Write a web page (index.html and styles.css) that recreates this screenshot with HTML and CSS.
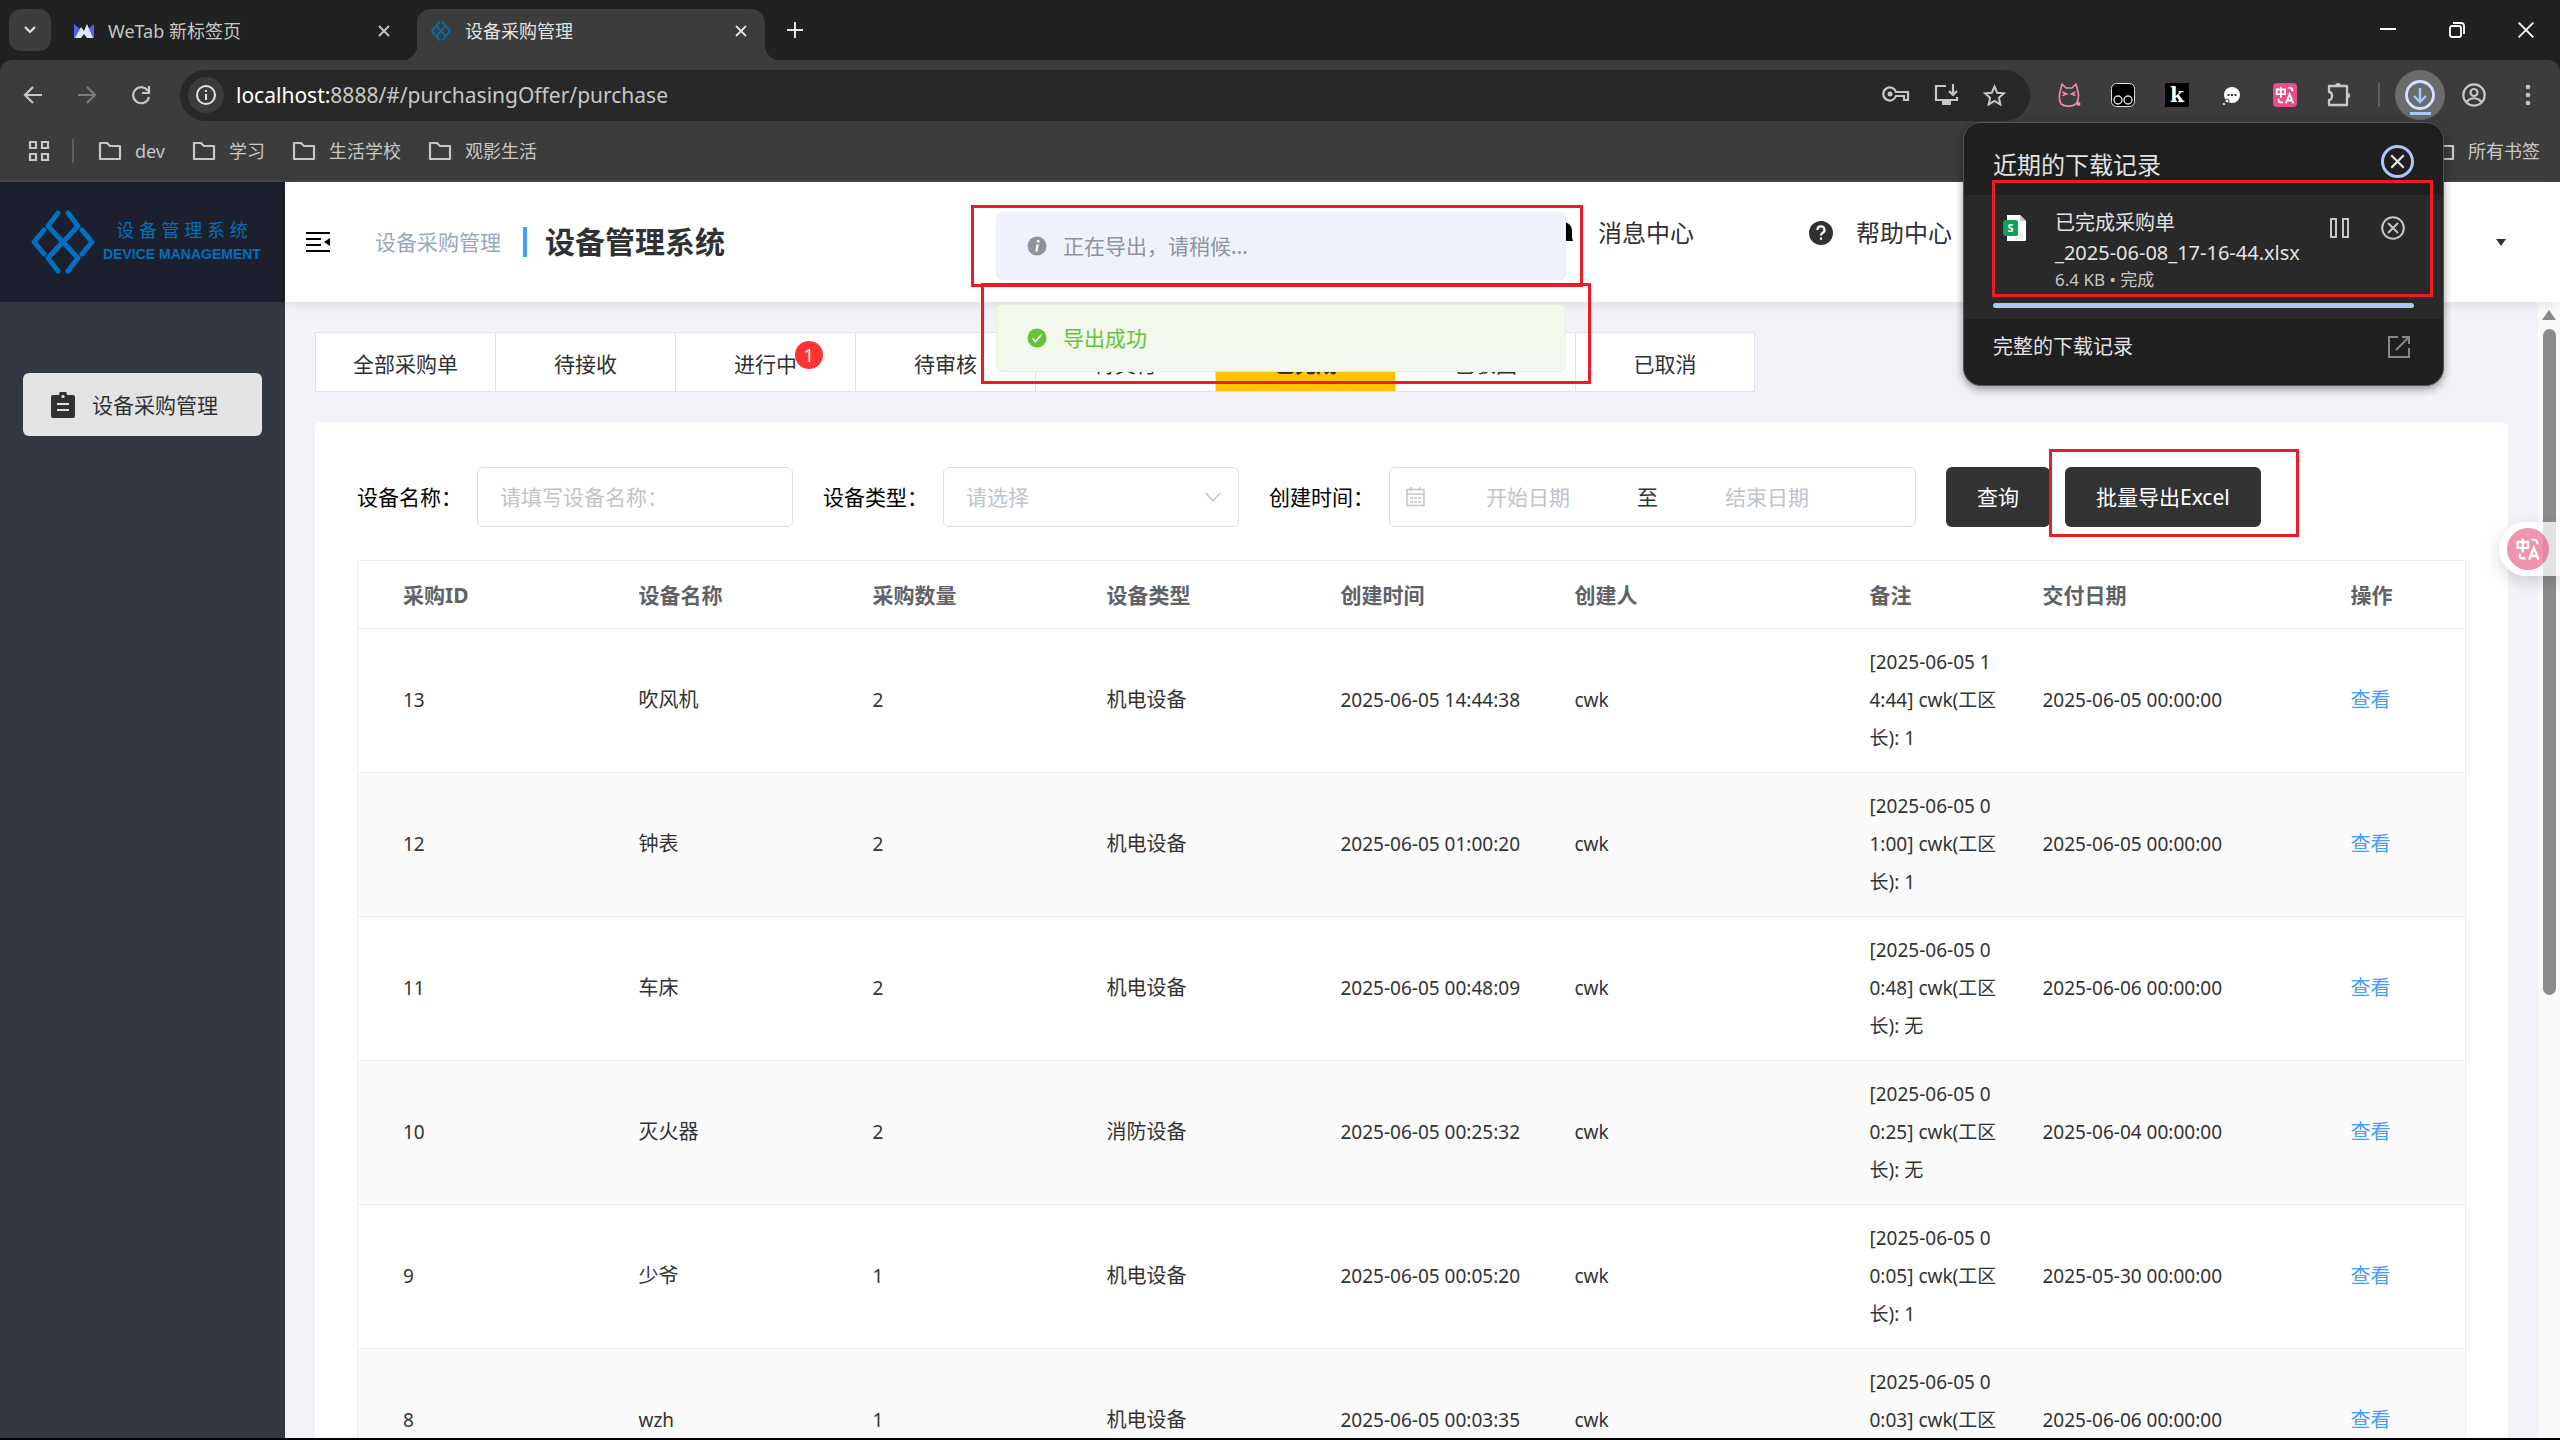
FILE: index.html
```html
<!DOCTYPE html>
<html lang="zh-CN">
<head>
  <meta charset="UTF-8">
  <meta name="viewport" content="width=device-width, initial-scale=1.0">
  <title>设备采购管理</title>
  <link rel="stylesheet" href="styles.css">
</head>
<body>

  <!-- shared symbols -->
  <svg class="defs" aria-hidden="true">
    <symbol id="i-x" viewBox="0 0 12 12"><path d="M1 1l10 10M11 1L1 11" fill="none" stroke="currentColor" stroke-width="1.8"/></symbol>
    <symbol id="i-folder" viewBox="0 0 24 20"><path d="M2 2h7l3 3h10v13H2z" fill="none" stroke="currentColor" stroke-width="2.2" stroke-linejoin="round"/></symbol>
    <symbol id="i-logo" viewBox="0 0 64 64">
      <g fill="none" stroke="#0070c0" stroke-width="5" stroke-linecap="round" stroke-linejoin="round">
        <path d="M27 3L17 16l30 32-10 13"/>
        <path d="M37 3l10 13-12 13"/>
        <path d="M29 35L17 48l10 13"/>
        <path d="M13 20L3 32l10 12"/>
        <path d="M51 20l10 12-10 12"/>
      </g>
    </symbol>
    <symbol id="i-trans" viewBox="0 0 24 24">
      <g fill="none" stroke="currentColor" stroke-width="2">
        <path d="M3 6h9v5H3zM7.500 3v12"/>
        <path d="M15 4h2a3 3 0 0 1 3 3v1M5 16v2a2 2 0 0 0 2 2h3"/>
        <path d="M13 21l4-10 4 10M14.500 18h5"/>
      </g>
    </symbol>
  </svg>

  <div class="tabstrip">
    <button class="tab-search" aria-label="搜索标签页"><svg width="12" height="8" viewBox="0 0 12 8"><path d="M1 1l5 5 5-5" fill="none" stroke="#e3e3e3" stroke-width="2.200"/></svg></button>
    <div class="tab">
      <svg class="favicon" viewBox="0 0 20 14"><path d="M0 0l6 5v9H0zM20 0l-6 5v9h6z" fill="#5661f0"/><path d="M1 14L7 3l3 4 3-7 6 14h-6l-3-4-3 4z" fill="#dfe3ff"/></svg>
      <span class="tab-title">WeTab 新标签页</span>
      <button class="tab-close" aria-label="关闭"><svg width="12" height="12"><use href="#i-x"/></svg></button>
    </div>
    <div class="tab active">
      <svg class="favicon"><use href="#i-logo"/></svg>
      <span class="tab-title">设备采购管理</span>
      <button class="tab-close" aria-label="关闭"><svg width="12" height="12"><use href="#i-x"/></svg></button>
    </div>
    <button class="tab-new" aria-label="新标签页"><svg width="16" height="16"><path d="M8 0v16M0 8h16" stroke="currentColor" stroke-width="2"/></svg></button>
    <div class="win-btns">
      <button aria-label="最小化"><svg width="16" height="16"><path d="M0 7h16" stroke="currentColor" stroke-width="2"/></svg></button>
      <button aria-label="还原"><svg width="16" height="16" viewBox="0 0 16 16"><rect x="1" y="4" width="11" height="11" rx="2" fill="none" stroke="currentColor" stroke-width="1.800"/><path d="M4 1h8a3 3 0 0 1 3 3v8" fill="none" stroke="currentColor" stroke-width="1.800"/></svg></button>
      <button aria-label="关闭窗口"><svg width="16" height="16" viewBox="0 0 12 12"><path d="M.5.500l11 11M11.500.500l-11 11" stroke="currentColor" stroke-width="1.400"/></svg></button>
    </div>
  </div>

  <div class="toolbar">
    <div class="nav-btns">
      <button aria-label="后退"><svg width="20" height="20" viewBox="0 0 20 20"><path d="M19 10H2M10 2l-8 8 8 8" fill="none" stroke="currentColor" stroke-width="2.200"/></svg></button>
      <button class="off" aria-label="前进"><svg width="20" height="20" viewBox="0 0 20 20"><path d="M1 10h17M10 2l8 8-8 8" fill="none" stroke="currentColor" stroke-width="2.200"/></svg></button>
      <button aria-label="重新加载"><svg width="20" height="20" viewBox="0 0 20 20"><path d="M17 6a8 8 0 1 0 1 6M18 1v7h-7" fill="none" stroke="currentColor" stroke-width="2.200"/></svg></button>
    </div>
    <div class="omnibox">
      <span class="site-info"><svg width="22" height="22" viewBox="0 0 22 22"><circle cx="11" cy="11" r="9" fill="none" stroke="#e3e3e3" stroke-width="2"/><path d="M11 10v6M11 6v2" stroke="#e3e3e3" stroke-width="2"/></svg></span>
      <div class="url"><b>localhost:</b>8888/#/purchasingOffer/purchase</div>
      <svg width="28" height="18" viewBox="0 0 28 18"><path d="M14 6h12v8h-4v-4h-8a6.500 6.500 0 1 1 0-4z" fill="none" stroke="currentColor" stroke-width="2.200"/><circle cx="8" cy="8" r="2.500" fill="currentColor"/></svg>
      <svg width="25" height="22" viewBox="0 0 25 22"><path d="M12 2H2v14h21v-3M19 0v10M15 7l4 4 4-4" fill="none" stroke="currentColor" stroke-width="2.200"/><path d="M8 17h9v4H8z" fill="currentColor"/></svg>
      <svg width="23" height="22" viewBox="0 0 23 22"><path d="M11.500 2.500l2.700 6.200 6.800.6-5.100 4.500 1.500 6.700-5.900-3.500-5.900 3.500 1.500-6.700L2 9.300l6.800-.6z" fill="none" stroke="currentColor" stroke-width="2"/></svg>
    </div>
    <div class="exts">
      <svg width="24" height="24" viewBox="0 0 24 24"><path d="M3 9L5 1l4 4h6l4-4 2 8c1 4 1 8-2 12-4 3-11 3-15 0-2-4-2-8-1-12z" fill="none" stroke="#f28cab" stroke-width="1.600" stroke-linejoin="round"/><path d="M5.500 9l4 2-4 1.500M18.500 9l-4 2 4 1.500" fill="none" stroke="#f28cab" stroke-width="1.600"/><circle cx="21.500" cy="21" r="2" fill="#f28cab"/></svg>
      <svg width="24" height="24" viewBox="0 0 24 24"><rect x=".5" y=".5" width="23" height="23" rx="5" fill="#000" stroke="#ddd"/><circle cx="7" cy="17" r="4" fill="none" stroke="#ddd" stroke-width="1.400"/><circle cx="17" cy="17" r="4" fill="none" stroke="#ddd" stroke-width="1.400"/></svg>
      <span class="ext-k">k</span>
      <svg width="24" height="24" viewBox="0 0 24 24"><circle cx="13" cy="12" r="8" fill="#fff"/><circle cx="8" cy="18" r="2" fill="#fff" stroke="#333"/><circle cx="5" cy="21" r="1" fill="#fff"/><path d="M8.500 12h2M12 12h2M15.500 12h2" stroke="#333" stroke-width="2"/></svg>
      <span class="ext-t"><svg width="22" height="22"><use href="#i-trans"/></svg></span>
      <svg width="24" height="24" viewBox="0 0 24 24"><path d="M2 3h18v19H2v-5c4 0 4-8 0-8z" fill="none" stroke="currentColor" stroke-width="2.300" stroke-linejoin="round"/><path d="M8 3a3 3 0 0 1 6 0zM20 9.500a3 3 0 0 1 0 6z" fill="currentColor"/></svg>
    </div>
    <span class="sep"></span>
    <button class="dl-btn" aria-label="下载"><svg width="32" height="36" viewBox="0 0 32 36"><circle cx="16" cy="15" r="13.500" fill="none" stroke="#d3e3fd" stroke-width="2.800"/><path d="M16 8v13M10 16l6 6 6-6" fill="none" stroke="#a8c7fa" stroke-width="2.400"/><path d="M6 33.500h21" stroke="#a8c7fa" stroke-width="3"/></svg></button>
    <svg class="profile" width="24" height="24" viewBox="0 0 24 24"><circle cx="12" cy="12" r="10.700" fill="none" stroke="currentColor" stroke-width="2.200"/><circle cx="12" cy="9.500" r="3.500" fill="none" stroke="currentColor" stroke-width="2.200"/><path d="M4.500 19c4-5 11-5 15 0" fill="none" stroke="currentColor" stroke-width="2.200"/></svg>
    <svg class="more" width="6" height="22"><g fill="currentColor"><circle cx="3" cy="3" r="2.300"/><circle cx="3" cy="11" r="2.300"/><circle cx="3" cy="19" r="2.300"/></g></svg>
  </div>

  <div class="bookmarks">
    <svg width="22" height="22" viewBox="0 0 22 22"><path d="M2 2h6v6H2zM14 2h6v6h-6zM2 14h6v6H2zM14 14h6v6h-6z" fill="none" stroke="currentColor" stroke-width="2.200"/></svg>
    <span class="sep"></span>
    <a href="#"><svg width="24" height="20"><use href="#i-folder"/></svg>dev</a>
    <a href="#"><svg width="24" height="20"><use href="#i-folder"/></svg>学习</a>
    <a href="#"><svg width="24" height="20"><use href="#i-folder"/></svg>生活学校</a>
    <a href="#"><svg width="24" height="20"><use href="#i-folder"/></svg>观影生活</a>
    <a class="all" href="#"><svg width="24" height="20"><use href="#i-folder"/></svg>所有书签</a>
  </div>

  <div class="app">
    <aside class="sidebar">
      <div class="logo">
        <svg width="64" height="64"><use href="#i-logo"/></svg>
        <div class="logo-text">
          <div class="logo-cn">设 备 管 理 系 统</div>
          <div class="logo-en">DEVICE MANAGEMENT</div>
        </div>
      </div>
      <a class="menu-item" href="#">
        <svg width="24" height="26" viewBox="0 0 24 26"><path d="M2 3h6a4 4 0 0 1 8 0h6a2 2 0 0 1 2 2v19a2 2 0 0 1-2 2H2a2 2 0 0 1-2-2V5a2 2 0 0 1 2-2z" fill="#303133"/><circle cx="12" cy="4.500" r="1.600" fill="#e3e3e3"/><path d="M6 12h12M6 18h12" stroke="#e3e3e3" stroke-width="2.200"/></svg>
        设备采购管理
      </a>
    </aside>

    <div class="main">
      <header class="header">
        <svg width="24" height="22" viewBox="0 0 24 22"><path d="M0 2h24M0 8h15M0 14h15M0 20h24" stroke="#000" stroke-width="2.200"/><path d="M24 7v8l-6-4z"/></svg>
        <span class="crumb">设备采购管理</span>
        <h1>设备管理系统</h1>
        <div class="header-right">
          <a class="bell" href="#"><svg width="24" height="24" viewBox="0 0 24 24"><path d="M12 1c7 0 10 4 10 9v7l1 3H1l1-3v-7c0-5 3-9 10-9z"/></svg>消息中心</a>
          <a class="help" href="#"><svg width="24" height="24" viewBox="0 0 24 24"><circle cx="12" cy="12" r="12" fill="#303133"/><path d="M8.500 9a3.500 3.500 0 1 1 5 3c-1 .6-1.500 1-1.500 2.500M12 16.500v2.200" fill="none" stroke="#fff" stroke-width="2.200"/></svg>帮助中心</a>
          <svg class="caret" width="10" height="7"><path d="M0 0h10L5 7z" fill="#303133"/></svg>
        </div>
      </header>

      <div class="scroll">
        <div class="content">
          <nav class="status-tabs">
            <button>全部采购单</button>
            <button>待接收</button>
            <button>进行中<span class="badge">1</span></button>
            <button>待审核</button>
            <button>待交付</button>
            <button class="active">已完成</button>
            <button>已驳回</button>
            <button>已取消</button>
          </nav>

          <div class="card">
            <form class="filters">
              <label for="devName">设备名称：</label>
              <input class="field name" id="devName" type="text" placeholder="请填写设备名称：">
              <label for="devType">设备类型：</label>
              <div class="select-wrap">
                <select class="field" id="devType"><option>请选择</option></select>
                <svg width="16" height="10"><path d="M1 1l7 8 7-8" fill="none" stroke="#c0c4cc" stroke-width="1.500"/></svg>
              </div>
              <label for="startDate">创建时间：</label>
              <div class="field range">
                <svg width="19" height="20" viewBox="0 0 19 20"><path d="M1 2.500h17v16H1zM1 7h17M5 0v4M14 0v4" fill="none" stroke="#c0c4cc" stroke-width="1.500"/><path d="M4 11h11M4 15h11" stroke="#c0c4cc" stroke-width="1.500" stroke-dasharray="3 1"/></svg>
                <input id="startDate" type="text" placeholder="开始日期">
                <span>至</span>
                <input type="text" placeholder="结束日期" aria-label="结束日期">
              </div>
              <button type="button" class="btn query">查询</button>
              <div class="export">
                <button type="button" class="btn">批量导出Excel</button>
                <i class="mark"></i>
              </div>
            </form>

            <table>
              <colgroup>
                <col class="c-id"><col class="c-std"><col class="c-std"><col class="c-std"><col class="c-std">
                <col class="c-user"><col class="c-note"><col class="c-date"><col class="c-op">
              </colgroup>
              <thead>
                <tr><th>采购ID</th><th>设备名称</th><th>采购数量</th><th>设备类型</th><th>创建时间</th><th>创建人</th><th>备注</th><th>交付日期</th><th>操作</th></tr>
              </thead>
              <tbody>
                <tr><td>13</td><td class="cn">吹风机</td><td>2</td><td class="cn">机电设备</td><td>2025-06-05 14:44:38</td><td>cwk</td><td class="note">[2025-06-05 14:44] cwk(工区长): 1</td><td>2025-06-05 00:00:00</td><td class="cn"><a href="#">查看</a></td></tr>
                <tr><td>12</td><td class="cn">钟表</td><td>2</td><td class="cn">机电设备</td><td>2025-06-05 01:00:20</td><td>cwk</td><td class="note">[2025-06-05 01:00] cwk(工区长): 1</td><td>2025-06-05 00:00:00</td><td class="cn"><a href="#">查看</a></td></tr>
                <tr><td>11</td><td class="cn">车床</td><td>2</td><td class="cn">机电设备</td><td>2025-06-05 00:48:09</td><td>cwk</td><td class="note">[2025-06-05 00:48] cwk(工区长): 无</td><td>2025-06-06 00:00:00</td><td class="cn"><a href="#">查看</a></td></tr>
                <tr><td>10</td><td class="cn">灭火器</td><td>2</td><td class="cn">消防设备</td><td>2025-06-05 00:25:32</td><td>cwk</td><td class="note">[2025-06-05 00:25] cwk(工区长): 无</td><td>2025-06-04 00:00:00</td><td class="cn"><a href="#">查看</a></td></tr>
                <tr><td>9</td><td class="cn">少爷</td><td>1</td><td class="cn">机电设备</td><td>2025-06-05 00:05:20</td><td>cwk</td><td class="note">[2025-06-05 00:05] cwk(工区长): 1</td><td>2025-05-30 00:00:00</td><td class="cn"><a href="#">查看</a></td></tr>
                <tr><td>8</td><td>wzh</td><td>1</td><td class="cn">机电设备</td><td>2025-06-05 00:03:35</td><td>cwk</td><td class="note">[2025-06-05 00:03] cwk(工区长): 1</td><td>2025-06-06 00:00:00</td><td class="cn"><a href="#">查看</a></td></tr>
              </tbody>
            </table>
          </div>
        </div>

        <div class="scrollbar">
          <svg width="14" height="10"><path d="M7 0l7 10H0z" fill="#8b8b8b"/></svg>
          <div class="thumb"></div>
        </div>
      </div>
    </div>
  </div>

  <div class="messages">
    <div class="message info">
      <svg width="20" height="20" viewBox="0 0 20 20"><circle cx="10" cy="10" r="9.500" fill="#909399"/><path d="M11.500 4l-.5 2.500M10.700 8.500L9.300 15.500" stroke="#fff" stroke-width="2.200"/></svg>
      正在导出，请稍候...
      <i class="mark"></i>
    </div>
    <div class="message success">
      <svg width="20" height="20" viewBox="0 0 20 20"><circle cx="10" cy="10" r="9.500" fill="#67c23a"/><path d="M5.500 10.500l3 3 6-7" fill="none" stroke="#fff" stroke-width="1.600"/></svg>
      导出成功
      <i class="mark"></i>
    </div>
  </div>

  <div class="translate-fab"><span><svg width="28" height="28"><use href="#i-trans"/></svg></span></div>

  <section class="downloads">
    <div class="dl-head">
      <h2>近期的下载记录</h2>
      <button aria-label="关闭"><svg width="15" height="15"><use href="#i-x"/></svg></button>
    </div>
    <div class="dl-item">
      <svg class="file" width="24" height="28" viewBox="0 0 24 28"><path d="M4 1h13l6 6v19a1 1 0 0 1-1 1H4z" fill="#fff"/><path d="M17 1l6 6h-6z" fill="#c9cdd0"/><path d="M12 19h8v6h-8z" fill="#e3f0e8"/><rect y="6" width="15" height="16" rx="2" fill="#0f9d58"/><text x="7.500" y="18" font-size="11" font-weight="700" text-anchor="middle" fill="#fff">S</text></svg>
      <div class="dl-info">
        <div class="dl-name">已完成采购单<br>_2025-06-08_17-16-44.xlsx</div>
        <div class="dl-size">6.4 KB • 完成</div>
      </div>
      <div class="dl-actions">
        <button aria-label="暂停"><svg width="19" height="20"><path d="M1 1h5v18H1zM13 1h5v18h-5z" fill="none" stroke="currentColor" stroke-width="2"/></svg></button>
        <button aria-label="取消"><svg width="24" height="24" viewBox="0 0 24 24"><circle cx="12" cy="12" r="10.800" fill="none" stroke="currentColor" stroke-width="2"/><path d="M7 7l10 10M17 7L7 17" stroke="currentColor" stroke-width="2"/></svg></button>
      </div>
      <div class="dl-bar"></div>
    </div>
    <a class="dl-foot" href="#">完整的下载记录
      <svg width="22" height="22" viewBox="0 0 22 22"><path d="M10 1H1v20h20v-9M14 1h7v7M21 1L8 14" fill="none" stroke="#858789" stroke-width="2"/></svg>
    </a>
    <i class="mark"></i>
  </section>

</body>
</html>
```

FILE: styles.css
```css
* {
  box-sizing: border-box;
  margin: 0;
  padding: 0;
}
:root {
  --chrome: #3c3c3c;
  --icon: #c7c7c7;
  --red: #ed1c24;
  --line: #ebeef5;
  --text: #303133;
}
body {
  display: flex;
  flex-direction: column;
  position: relative;
  height: 100vh;
  overflow: hidden;
  background: #1f2221;
  color: var(--text);
  font: 21px/32px "Noto Sans", "Noto Sans CJK SC", sans-serif;
}
a {
  color: inherit;
  text-decoration: none;
}
button {
  background: none;
  border: 0;
  color: inherit;
  font: inherit;
  cursor: pointer;
}
svg {
  flex: none;
  display: block;
}
.defs {
  position: absolute;
  width: 0;
  height: 0;
}
.mark {
  position: absolute;
  border: 3px solid var(--red);
  pointer-events: none;
}

/* browser window */
.tabstrip {
  display: flex;
  align-items: flex-end;
  flex: none;
  height: 60px;
  padding-left: 9px;
  color: #e3e3e3;
  font-size: 18px;
}
.tab-search {
  display: flex;
  align-items: center;
  justify-content: center;
  width: 42px;
  height: 42px;
  margin-bottom: 9px;
  border-radius: 12px;
  background: var(--chrome);
}
.tab {
  display: flex;
  align-items: center;
  width: 348px;
  height: 51px;
  padding: 0 18px 8px 14px;
  margin-left: 9px;
  color: #c7c7c7;
}
.tab.active {
  position: relative;
  border-radius: 14px 14px 0 0;
  background: var(--chrome);
  color: #e3e3e3;
}
.tab.active::before,
.tab.active::after {
  content: "";
  position: absolute;
  bottom: 0;
  width: 14px;
  height: 14px;
}
.tab.active::before {
  right: 100%;
  background: radial-gradient(circle at 0 0, transparent 14px, var(--chrome) 14px);
}
.tab.active::after {
  left: 100%;
  background: radial-gradient(circle at 100% 0, transparent 14px, var(--chrome) 14px);
}
.favicon {
  width: 20px;
  height: 20px;
  margin-right: 14px;
}
.tab-title {
  flex: 1;
}
.tab-new {
  margin: 0 0 22px 22px;
}
.win-btns {
  display: flex;
  gap: 53px;
  margin: 0 26px 22px auto;
  color: #fff;
}
.toolbar {
  display: flex;
  align-items: center;
  flex: none;
  height: 70px;
  padding: 0 29px 0 23px;
  border-radius: 12px 12px 0 0;
  background: var(--chrome);
  color: var(--icon);
}
.nav-btns {
  display: flex;
  gap: 34px;
}
.nav-btns .off {
  color: #7c7c7c;
}
.omnibox {
  display: flex;
  align-items: center;
  flex: 1;
  gap: 24px;
  height: 51px;
  margin-left: 29px;
  padding: 0 24px 0 8px;
  border-radius: 26px;
  background: #282828;
}
.site-info {
  display: flex;
  align-items: center;
  justify-content: center;
  width: 36px;
  height: 36px;
  border-radius: 50%;
  background: var(--chrome);
}
.url {
  flex: 1;
  margin-left: -12px;
}
.url b {
  color: #fff;
  font-weight: 400;
}
.exts {
  display: flex;
  gap: 30px;
  margin-left: 27px;
}
.ext-k,
.ext-t {
  display: flex;
  align-items: center;
  justify-content: center;
  width: 24px;
  height: 24px;
  background: #000;
  color: #fff;
  font: 700 20px/24px "DejaVu Serif", serif;
}
.ext-t {
  border-radius: 4px;
  background: #ea4c89;
}
.sep {
  width: 2px;
  height: 24px;
  background: #5e5e5e;
}
.toolbar .sep {
  margin-left: 27px;
}
.dl-btn {
  display: flex;
  align-items: center;
  justify-content: center;
  width: 50px;
  height: 50px;
  margin-left: 15px;
  padding-top: 6px;
  border-radius: 50%;
  background: #6b6b6b;
}
.profile {
  margin-left: 17px;
}
.more {
  margin-left: 39px;
}
.bookmarks {
  display: flex;
  align-items: center;
  flex: none;
  height: 52px;
  padding: 0 20px 8px 28px;
  border-bottom: 2px solid #444;
  background: var(--chrome);
  color: var(--icon);
  font-size: 18px;
}
.bookmarks .sep {
  margin: 0 24px 0 22px;
}
.bookmarks a {
  display: flex;
  align-items: center;
  gap: 13px;
  margin-right: 27px;
}
.bookmarks .all {
  margin: 0 0 0 auto;
}

/* page */
.app {
  display: flex;
  flex: 1;
  min-height: 0;
  border-bottom: 2px solid #000;
}
.sidebar {
  flex: none;
  width: 285px;
  background: #333742;
}
.logo {
  display: flex;
  align-items: center;
  gap: 8px;
  height: 120px;
  padding-left: 31px;
  background: #1c1f2d;
  color: #0070b8;
}
.logo-text {
  text-align: center;
}
.logo-cn {
  font-size: 18px;
  line-height: 24px;
}
.logo-en {
  font-family: "Liberation Sans", sans-serif;
  font-size: 14px;
  font-weight: 700;
  line-height: 24px;
  white-space: nowrap;
}
.menu-item {
  display: flex;
  align-items: center;
  gap: 17px;
  height: 63px;
  margin: 71px 23px 0;
  padding-left: 28px;
  border-radius: 6px;
  background: #e3e3e3;
}
.main {
  display: flex;
  flex-direction: column;
  flex: 1;
  min-width: 0;
  background: #f2f3f8;
}
.header {
  display: flex;
  align-items: center;
  flex: none;
  height: 120px;
  padding: 0 54px 0 21px;
  background: #fff;
  box-shadow: 0 2px 12px rgba(0, 0, 0, 0.1);
  z-index: 1;
}
.crumb {
  margin: 0 22px 0 45px;
  color: #97a8be;
}
.header h1 {
  display: flex;
  align-items: center;
  gap: 18px;
  font-size: 30px;
  line-height: 40px;
}
.header h1::before {
  content: "";
  width: 4px;
  height: 30px;
  background: #409eff;
}
.header-right {
  display: flex;
  align-items: center;
  margin-left: auto;
  font-size: 24px;
}
.header-right a {
  display: flex;
  align-items: center;
  padding-bottom: 18px;
}
.bell {
  gap: 24px;
  margin-right: 115px;
}
.help {
  gap: 23px;
  margin-right: 544px;
}
.scroll {
  display: flex;
  flex: 1;
  min-height: 0;
}
.content {
  flex: 1;
  min-width: 0;
  overflow: hidden;
  padding: 30px 30px 0;
}
.status-tabs {
  display: flex;
  width: fit-content;
  border: 1px solid #dfe1e6;
  background: #fff;
}
.status-tabs button {
  position: relative;
  width: 180px;
  height: 58px;
  padding-top: 4px;
  border-right: 1px solid #dfe1e6;
}
.status-tabs button:last-child {
  width: 178px;
  border-right: 0;
}
.status-tabs .active {
  background: #ffc300;
  font-weight: 700;
}
.badge {
  position: absolute;
  top: 8px;
  left: 119px;
  width: 28px;
  height: 28px;
  border-radius: 50%;
  background: #f33;
  color: #fff;
  font-size: 18px;
  line-height: 28px;
}
.card {
  margin-top: 30px;
  padding: 45px 42px;
  border-radius: 6px;
  background: #fff;
}
.filters {
  display: flex;
  align-items: center;
  color: #000;
}
.filters label {
  width: 120px;
}
.filters label:not(:first-child) {
  margin-left: 30px;
}
.field,
.range input {
  height: 60px;
  border: 1px solid #dcdfe6;
  border-radius: 6px;
  background: #fff;
  color: #c0c4cc;
  font: inherit;
}
.field.name {
  width: 316px;
  padding: 0 22px;
}
::placeholder {
  color: #c0c4cc;
}
.select-wrap {
  position: relative;
  width: 296px;
}
.select-wrap select {
  width: 100%;
  padding: 0 22px;
  appearance: none;
}
.select-wrap svg {
  position: absolute;
  right: 18px;
  top: 25px;
}
.range {
  display: flex;
  align-items: center;
  width: 527px;
  padding: 0 16px;
  color: var(--text);
}
.range input {
  width: 206px;
  height: 50px;
  border: 0;
  background: none;
  text-align: center;
}
.range span {
  margin: 0 6px;
}
.btn {
  height: 60px;
  padding: 0 31px;
  border-radius: 6px;
  background: #333;
  color: #fff;
}
.query {
  margin-left: 30px;
}
.export {
  position: relative;
  margin-left: 15px;
}
.export .mark {
  inset: -18px -38px -10px -16px;
}
table {
  width: 100%;
  margin-top: 33px;
  border: 1px solid var(--line);
  border-collapse: collapse;
  table-layout: fixed;
  color: #333;
}
.c-id {
  width: 237px;
}
.c-std {
  width: 234px;
}
.c-user {
  width: 295px;
}
.c-note {
  width: 173px;
}
.c-date {
  width: 308px;
}
.c-op {
  width: 159px;
}
th,
td {
  padding: 14px 0 15px 44px;
  border-bottom: 1px solid var(--line);
  text-align: left;
}
th {
  height: 68px;
  padding-bottom: 14px;
  color: #606266;
}
td {
  font-size: 19px;
  line-height: 38px;
}
th:first-child,
td:first-child {
  padding-left: 45px;
}
.cn {
  font-size: 20px;
}
.note {
  word-break: break-all;
}
td a {
  color: #409eff;
}
tbody tr:nth-child(even) {
  background: #fafafa;
}
.scrollbar {
  display: flex;
  flex-direction: column;
  align-items: center;
  flex: none;
  gap: 9px;
  width: 22px;
  padding: 8px 0 0;
  background: #fafafa;
}
.thumb {
  width: 13px;
  height: 59%;
  border-radius: 7px;
  background: #8b8b8b;
}

/* toasts */
.messages {
  position: absolute;
  top: 212px;
  left: 50%;
  display: flex;
  flex-direction: column;
  gap: 24px;
  width: 570px;
  margin-left: -284px;
  z-index: 2;
}
.message {
  position: relative;
  display: flex;
  align-items: center;
  gap: 16px;
  height: 68px;
  padding-left: 30px;
  border: 1px solid var(--line);
  border-radius: 6px;
  background: #edf2fc;
  color: #909399;
}
.message.success {
  border-color: #e1f3d8;
  background: #f0f9eb;
  color: #67c23a;
}
.info .mark {
  inset: -8px -18px -8px -26px;
}
.success .mark {
  inset: -22px -26px -13px -16px;
}
.translate-fab {
  position: absolute;
  top: 522px;
  right: 0;
  width: 61px;
  padding: 6px 0 6px 8px;
  border-radius: 27px 0 0 27px;
  background: rgba(255, 255, 255, 0.75);
  box-shadow: 0 6px 16px rgba(0, 0, 0, 0.15);
}
.translate-fab span {
  display: flex;
  align-items: center;
  justify-content: center;
  width: 42px;
  height: 42px;
  border-radius: 50%;
  background: rgba(234, 76, 120, 0.6);
  color: #fff;
}

/* downloads bubble */
.downloads {
  position: absolute;
  top: 122px;
  right: 116px;
  width: 481px;
  border: 1px solid #555;
  border-radius: 18px;
  background: #1f1f1f;
  box-shadow: 0 3px 8px rgba(0, 0, 0, 0.4);
  color: #e3e3e3;
  z-index: 3;
}
.downloads .mark {
  inset: 57px 10px 88px 28px;
}
.dl-head,
.dl-foot {
  display: flex;
  align-items: center;
  justify-content: space-between;
  padding: 0 29px;
}
.dl-head {
  height: 72px;
  padding-top: 4px;
}
.dl-head h2 {
  padding-top: 8px;
  font-size: 24px;
  font-weight: 400;
}
.dl-head button {
  display: flex;
  align-items: center;
  justify-content: center;
  width: 33px;
  height: 33px;
  border: 3px solid #a8c7fa;
  border-radius: 50%;
}
.dl-item {
  display: flex;
  flex-wrap: wrap;
  align-items: flex-start;
  padding: 13px 29px 11px;
  background: #292929;
}
.file {
  margin: 6px 28px 0 10px;
}
.dl-info {
  flex: 1;
}
.dl-name {
  font-size: 20px;
  line-height: 30px;
}
.dl-size {
  color: var(--icon);
  font-size: 17px;
  line-height: 24px;
}
.dl-actions {
  display: flex;
  align-items: center;
  gap: 32px;
  padding: 8px 9px 0 0;
  color: var(--icon);
}
.dl-bar {
  width: 100%;
  height: 5px;
  margin-top: 11px;
  border-radius: 3px;
  background: #a8c7fa;
}
.dl-foot {
  height: 66px;
  padding: 0 33px 10px 29px;
  font-size: 20px;
}
```
